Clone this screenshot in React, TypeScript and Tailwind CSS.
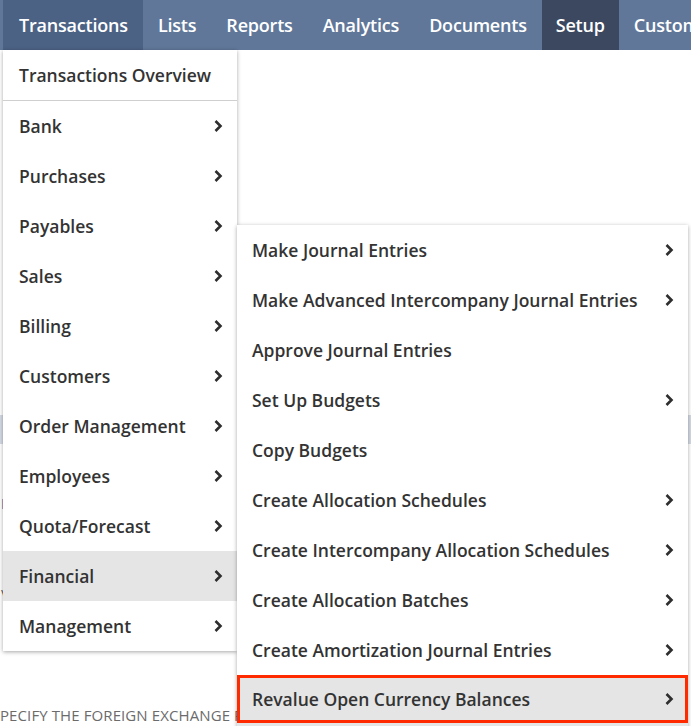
import React from "react";

const topItems = [
  "Transactions",
  "Lists",
  "Reports",
  "Analytics",
  "Documents",
  "Setup",
  "Customization",
];

const mainMenu = [
  "Bank",
  "Purchases",
  "Payables",
  "Sales",
  "Billing",
  "Customers",
  "Order Management",
  "Employees",
  "Quota/Forecast",
  "Financial",
  "Management",
];

const financialMenu: { label: string; sub: boolean }[] = [
  { label: "Make Journal Entries", sub: true },
  { label: "Make Advanced Intercompany Journal Entries", sub: true },
  { label: "Approve Journal Entries", sub: false },
  { label: "Set Up Budgets", sub: true },
  { label: "Copy Budgets", sub: false },
  { label: "Create Allocation Schedules", sub: true },
  { label: "Create Intercompany Allocation Schedules", sub: true },
  { label: "Create Allocation Batches", sub: true },
  { label: "Create Amortization Journal Entries", sub: true },
  { label: "Revalue Open Currency Balances", sub: true },
];

function Chevron() {
  return (
    <svg width="10" height="14" viewBox="0 0 10 14" className="shrink-0">
      <polyline
        points="2.5,2 7.5,7 2.5,12"
        fill="none"
        stroke="#2e2e2e"
        strokeWidth="2.6"
        strokeLinecap="butt"
        strokeLinejoin="miter"
      />
    </svg>
  );
}

export default function App() {
  return (
    <div
      className="relative h-[726px] w-[691px] overflow-hidden bg-white"
      style={{ fontFamily: "'Open Sans', 'Liberation Sans', sans-serif" }}
    >
      {/* top nav */}
      <nav className="flex h-[50px] bg-[#607799] pl-[3px] text-[18px] font-semibold text-white">
        {topItems.map((t) => (
          <div
            key={t}
            className={
              "flex h-full items-center whitespace-nowrap tracking-[-0.2px] " +
              (t === "Transactions"
                ? "bg-[#4c6285] pl-[16px] pr-[15px]"
                : t === "Setup"
                  ? "bg-[#3b4860] px-[14px]"
                  : "px-[15px]")
            }
          >
            {t}
          </div>
        ))}
      </nav>

      {/* page content behind the menus */}
      <div className="flex flex-col">
        <div className="h-[46px] pl-[3px] pt-[40px] text-[12px] text-[#c96a1b]">(</div>
        <div className="mt-[319px] h-[29px] bg-[#d5dbe5]" />
        <div className="mt-[50px] h-[20px] pl-[1px] text-[14px] leading-[20px] text-[#3d6fb6]">F</div>
        <div className="mt-[71px] h-[20px] pl-[1px] text-[14px] leading-[20px] text-[#555]">\</div>
        <div className="mt-[100px] whitespace-nowrap text-[15px] leading-[20px] tracking-[0.1px] text-[#6b6b6b]">
          PECIFY THE FOREIGN EXCHANGE RATES
        </div>
      </div>

      {/* first level dropdown */}
      <div className="absolute left-[3px] top-[50px] w-[234px] bg-white text-[17.5px] font-semibold text-[#333] shadow-[0_1px_4px_rgba(0,0,0,0.35)]">
        <div className="flex h-[51px] items-center border-b border-[#cfcfcf] pl-[16px]">
          Transactions Overview
        </div>
        {mainMenu.map((m) => (
          <div
            key={m}
            className={
              "flex h-[50px] items-center justify-between pl-[16px] pr-[14px] " +
              (m === "Financial" ? "bg-[#e5e5e5]" : "")
            }
          >
            <span>{m}</span>
            <Chevron />
          </div>
        ))}
      </div>

      {/* financial submenu */}
      <div className="absolute left-[237px] top-[225px] w-[451px] bg-white text-[17.5px] font-semibold text-[#333] shadow-[0_1px_4px_rgba(0,0,0,0.35)]">
        {financialMenu.map((f) => {
          const hl = f.label === "Revalue Open Currency Balances";
          return (
            <div
              key={f.label}
              className={
                "flex items-center justify-between " +
                (hl
                  ? "h-[48px] border-[3px] border-[#ff2a00] bg-[#e5e5e5] pl-[12px] pr-[11px]"
                  : "h-[50px] pl-[15px] pr-[14px]")
              }
            >
              <span className="whitespace-nowrap">{f.label}</span>
              {f.sub && <Chevron />}
            </div>
          );
        })}
        <div className="h-[20px] bg-[#e5e5e5]" />
      </div>
    </div>
  );
}
